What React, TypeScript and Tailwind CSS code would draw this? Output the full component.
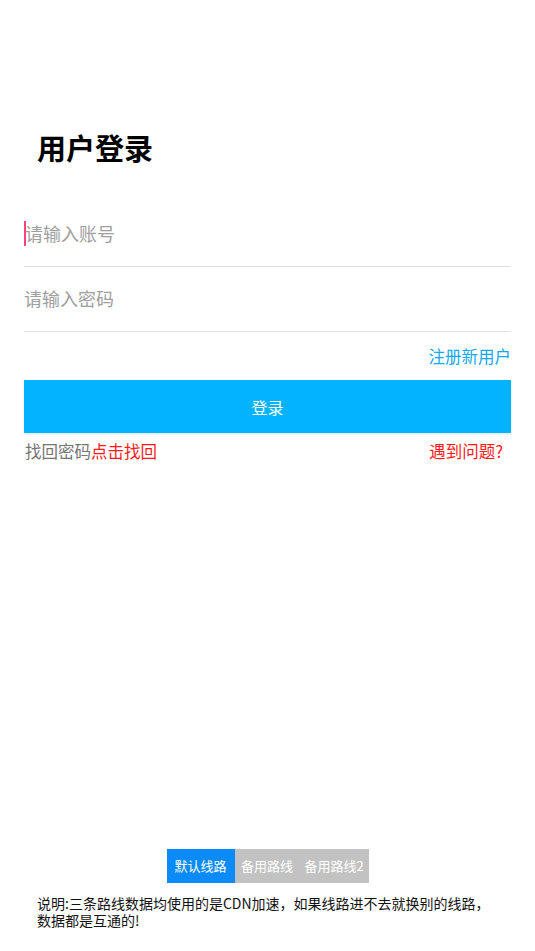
export default function App() {
  return (
    <div className="min-h-[951px] w-full bg-white flex flex-col font-['Noto_Sans_CJK_SC','Noto_Sans',sans-serif] text-black">
      <div className="flex flex-col px-[24px] pt-[126px]">
        <h1 className="h-[42px] leading-[42px] pl-[13px] text-[29px] font-bold">用户登录</h1>

        <div className="relative mt-[35px] h-[64px] flex items-center border-b border-[#e0e0e0]">
          <span className="absolute left-0 top-[18px] w-[2px] h-[25px] bg-[#ff4081]" />
          <input
            className="w-full pl-[1px] -mt-[2px] bg-transparent outline-none text-[18px] placeholder:text-[#a0a0a0]"
            placeholder="请输入账号"
          />
        </div>

        <div className="h-[65px] flex items-center border-b border-[#e0e0e0]">
          <input
            type="password"
            className="w-full -mt-[2px] bg-transparent outline-none text-[18px] placeholder:text-[#a0a0a0]"
            placeholder="请输入密码"
          />
        </div>

        <div className="h-[48px] flex items-center justify-end">
          <span className="text-[16.5px] text-[#12a8f2]">注册新用户</span>
        </div>

        <button className="h-[53px] w-full bg-[#03b3fe] text-white text-[16px] shadow-[0_1px_2px_rgba(0,0,0,0.12)]">
          登录
        </button>

        <div className="h-[36px] flex items-center justify-between pr-[8px] text-[16.5px]">
          <span className="pl-[1px]">
            <span className="text-[#757575]">找回密码</span>
            <span className="text-[#ff1a1a]">点击找回</span>
          </span>
          <span className="text-[#ff1a1a]">遇到问题?</span>
        </div>
      </div>

      <div className="mt-auto flex flex-col items-center pb-[22px]">
        <div className="flex h-[34px] text-[13px] text-white">
          <div className="w-[68px] flex items-center justify-center bg-[#0b8bfa]">默认线路</div>
          <div className="w-[65px] flex items-center justify-center bg-[#c2c2c2]">备用路线</div>
          <div className="w-[69px] flex items-center justify-center bg-[#c2c2c2]">备用路线2</div>
        </div>
        <p className="self-stretch mt-[12px] px-[37px] text-[14px] leading-[17px] text-[#111]">
          说明:三条路线数据均使用的是CDN加速，如果线路进不去就换别的线路，数据都是互通的!
        </p>
      </div>
    </div>
  );
}
